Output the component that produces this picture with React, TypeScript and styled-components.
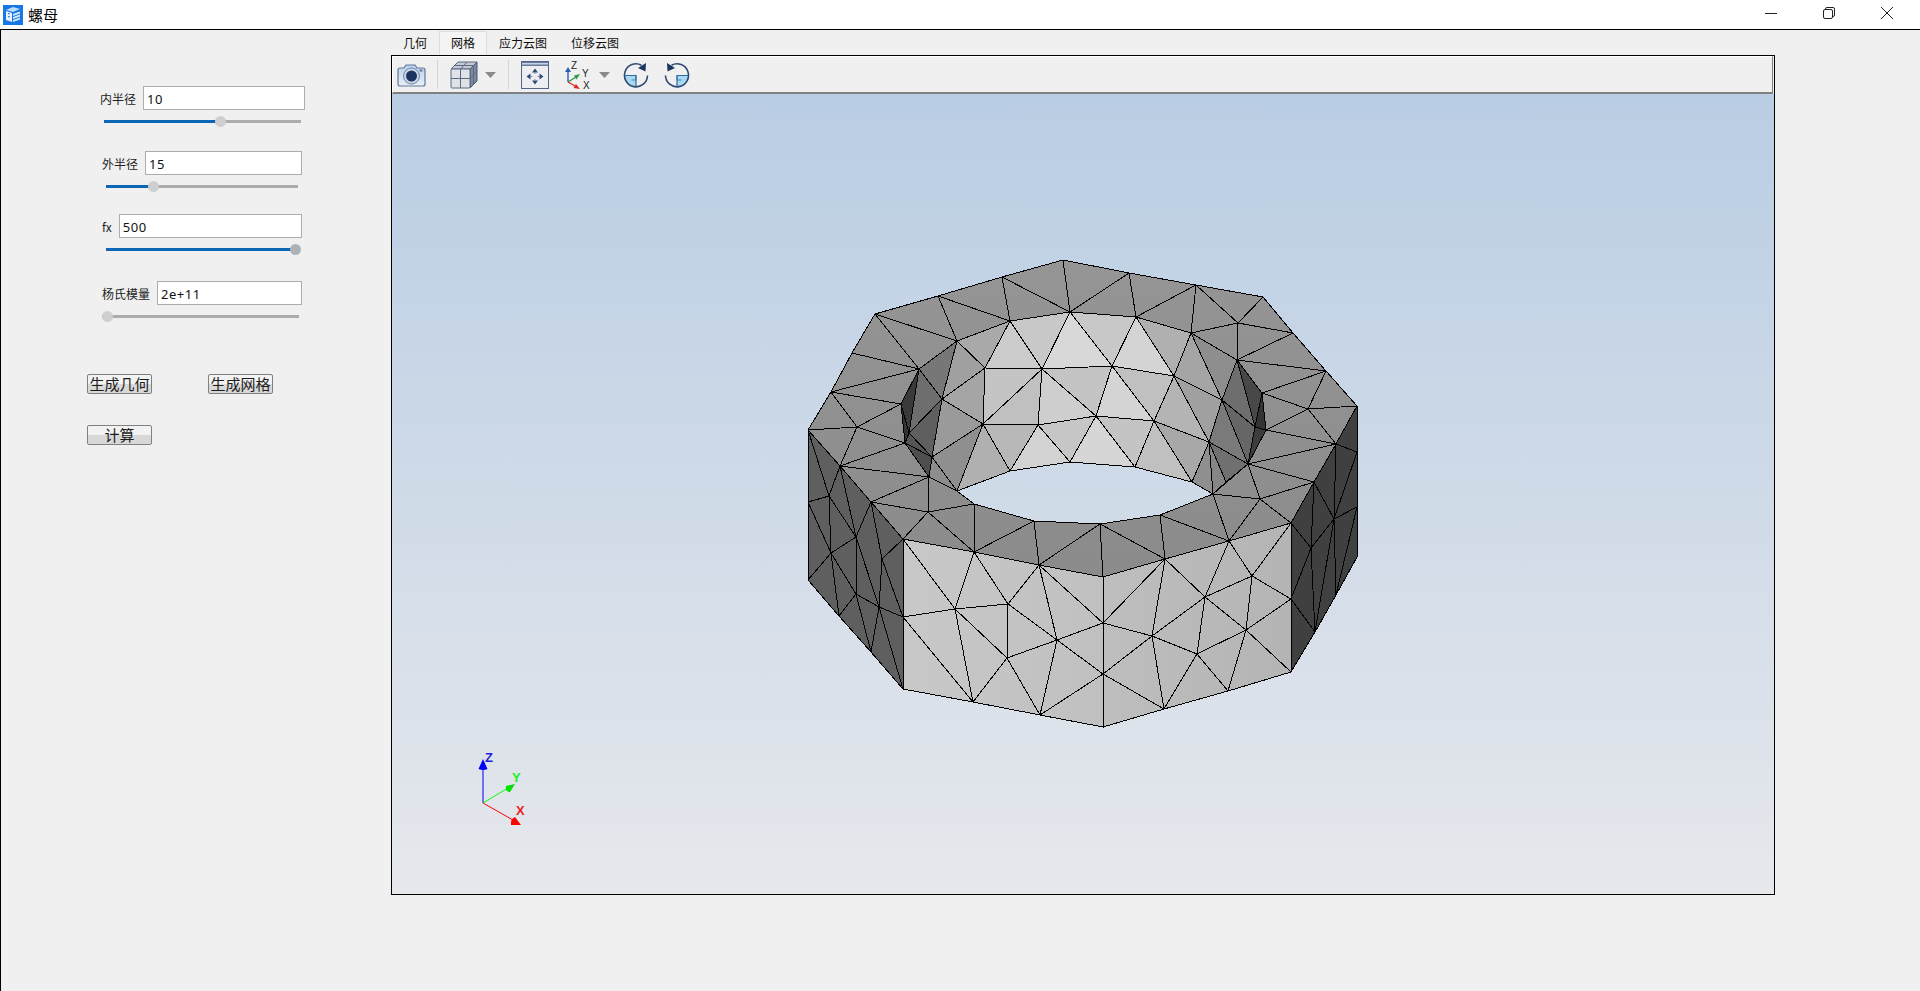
import React from "react";
import styled, { createGlobalStyle } from "styled-components";

const GlobalStyle = createGlobalStyle`
  html, body {
    margin: 0;
    padding: 0;
    background: #f0f0f0;
    overflow: hidden;
  }
  * {
    box-sizing: border-box;
  }
`;

const cjk = `"Noto Sans CJK SC", "Noto Sans", sans-serif`;

const Window = styled.div`
  width: 1920px;
  height: 991px;
  display: flex;
  flex-direction: column;
  font-family: ${cjk};
  color: #111;
`;

const TitleBar = styled.div`
  height: 29px;
  background: #fff;
  display: flex;
  align-items: center;
  padding: 0 4px 0 3px;
`;

const AppName = styled.span`
  font-size: 15px;
  margin-left: 5px;
  flex: 1;
  color: #000;
`;

const WinButton = styled.div`
  width: 58px;
  height: 29px;
  display: flex;
  align-items: center;
  justify-content: center;
  padding-bottom: 3px;
`;

const Body = styled.div`
  flex: 1;
  display: flex;
  background: #f0f0f0;
  border-top: 1px solid #000;
  border-left: 1px solid #000;
`;

const Sidebar = styled.div`
  width: 390px;
  padding-top: 56px;
`;

const Group = styled.div<{ $top: number }>`
  margin-top: ${({ $top }) => $top}px;
`;

const FieldRow = styled.div<{ $left: number; $width: number }>`
  display: flex;
  align-items: center;
  gap: 7px;
  height: 24px;
  margin-left: ${({ $left }) => $left}px;
  width: ${({ $width }) => $width}px;
`;

const FieldLabel = styled.label`
  font-size: 12px;
  white-space: nowrap;
  color: #222;
`;

const Input = styled.input`
  flex: 1;
  min-width: 0;
  height: 24px;
  border: 1px solid #adadad;
  background: #fff;
  padding: 1px 3px 0;
  font-family: "Noto Sans", sans-serif;
  font-size: 13px;
  letter-spacing: 0.5px;
  color: #111;
  outline: none;
`;

const SliderTrack = styled.div<{ $left: number; $width: number }>`
  position: relative;
  height: 3px;
  margin: 10px 0 0 ${({ $left }) => $left}px;
  width: ${({ $width }) => $width}px;
  background: #acacac;
`;

const SliderFill = styled.div`
  height: 3px;
  background: #0b66b6;
`;

const SliderThumb = styled.div<{ $hot?: boolean }>`
  position: absolute;
  top: -4px;
  width: 11px;
  height: 11px;
  margin-left: -5px;
  border-radius: 50%;
  background: ${({ $hot }) => ($hot ? "#adb2b7" : "#cfcfcf")};
`;

const ButtonRow = styled.div<{ $top: number }>`
  display: flex;
  gap: 56px;
  margin: ${({ $top }) => $top}px 0 0 86px;
`;

const PushButton = styled.button`
  width: 65px;
  height: 20px;
  padding: 0;
  border: 1px solid #808080;
  border-radius: 2px;
  background: linear-gradient(#f2f2f2 0, #f2f2f2 50%, #d8d8d8 50%, #d8d8d8 100%);
  font-family: ${cjk};
  font-size: 15px;
  line-height: 18px;
  color: #1c1c1c;
  white-space: nowrap;
  overflow: hidden;
`;

const Main = styled.div`
  width: 1384px;
  padding-top: 1px;
  display: flex;
  flex-direction: column;
`;

const TabBar = styled.div`
  height: 24px;
  display: flex;
`;

const Tab = styled.div<{ $active?: boolean }>`
  padding: 0 ${({ $active }) => ($active ? 11 : 12)}px;
  font-size: 12px;
  line-height: 24px;
  color: #111;
  ${({ $active }) =>
    $active
      ? `
    background: #f4f4f4;
    border: 1px solid #dcdcdc;
    border-bottom: 0;
    line-height: 22px;
  `
      : ""}
`;

const Frame = styled.div`
  width: 1384px;
  height: 840px;
  border: 1px solid #000;
  background: #f0f0f0;
`;

const Toolbar = styled.div`
  height: 38px;
  margin-right: 1px;
  border-top: 1px solid #fff;
  border-left: 1px solid #fff;
  border-right: 1px solid #808080;
  border-bottom: 2px solid #808080;
  display: flex;
  align-items: center;
`;

const ToolIcon = styled.svg<{ $left: number }>`
  flex: none;
  display: block;
  margin-left: ${({ $left }) => $left}px;
`;

const Separator = styled.div<{ $left: number }>`
  width: 1px;
  height: 29px;
  background: #d4d4d4;
  margin-left: ${({ $left }) => $left}px;
`;

const Viewport = styled.div`
  width: 1382px;
  height: 800px;
  background: linear-gradient(#b9cde4, #e6e8ec);
`;

const Scene = styled.svg`
  display: block;
`;

const AxisLetter = styled.text`
  font-family: "Liberation Sans", sans-serif;
  font-size: 13px;
  font-weight: 700;
`;

type P = [number, number];
const pts = (list: P[]) => list.map(([x, y]) => `${x},${y}`).join(" ");

// inner wall nodes
const a0: P = [919, 369];
const a1: P = [957, 341];
const a2: P = [1010, 321];
const a3: P = [1070, 312];
const a4: P = [1136, 317];
const a5: P = [1191, 333];
const a6: P = [1237, 360];
const m1: P = [942, 399];
const m2: P = [985, 368];
const m3: P = [1042, 369];
const m4: P = [1112, 366];
const m5: P = [1174, 376];
const m6: P = [1222, 400];
const n1: P = [932, 457];
const n2: P = [983, 424];
const n3: P = [1038, 425];
const n4: P = [1096, 416];
const n5: P = [1154, 421];
const n6: P = [1209, 442];
const b0: P = [957, 491];
const b1: P = [1010, 471];
const b2: P = [1070, 462];
const b3: P = [1135, 467];
const b4: P = [1192, 482];
const b5: P = [1213, 494];
const c: P = [1248, 464];
const e: P = [1226, 482];
const p: P = [1255, 427];
const u: P = [1262, 393];
const v: P = [1266, 430];
const q: P = [909, 433];
const r: P = [901, 404];
const s: P = [905, 443];
const t: P = [929, 477];

const wall: [P[], string][] = [
  [[a1, a2, m2], "#a9a9a9"],
  [[a2, a3, m3], "#c8c8c8"],
  [[a2, m2, m3], "#cbcbcb"],
  [[a3, m3, m4], "#d8d8d8"],
  [[a3, a4, m4], "#c8c8c8"],
  [[a4, m4, m5], "#d4d4d4"],
  [[a4, a5, m5], "#b0b0b0"],
  [[a5, m5, m6], "#a5a5a5"],
  [[a5, a6, m6], "#8e8e8e"],
  [[a1, m1, m2], "#a0a0a0"],
  [[a0, a1, m1], "#777777"],
  [[m1, m2, n2], "#a5a5a5"],
  [[m2, m3, n2], "#c4c4c4"],
  [[m3, n2, n3], "#c0c0c0"],
  [[m3, n3, n4], "#cecece"],
  [[m3, m4, n4], "#c4c4c4"],
  [[m4, n4, n5], "#d4d4d4"],
  [[m4, m5, n5], "#c0c0c0"],
  [[m5, n5, n6], "#b4b4b4"],
  [[m5, m6, n6], "#a0a0a0"],
  [[a6, m6, p], "#6e6e6e"],
  [[a6, u, p], "#484848"],
  [[u, v, p], "#333333"],
  [[m6, p, c], "#666666"],
  [[p, v, c], "#3c3c3c"],
  [[m6, n6, c], "#7a7a7a"],
  [[n6, e, c], "#707070"],
  [[n6, b4, b5], "#8f8f8f"],
  [[n6, b5, e], "#868686"],
  [[n5, n6, b4], "#a8a8a8"],
  [[n5, b3, b4], "#c0c0c0"],
  [[n4, n5, b3], "#c4c4c4"],
  [[n4, b2, b3], "#d6d6d6"],
  [[n3, n4, b2], "#c6c6c6"],
  [[n3, b1, b2], "#d2d2d2"],
  [[n2, n3, b1], "#b8b8b8"],
  [[n2, b0, b1], "#b0b0b0"],
  [[m1, n2, n1], "#9a9a9a"],
  [[n1, n2, b0], "#8f8f8f"],
  [[a0, m1, q], "#6e6e6e"],
  [[m1, n1, q], "#5f5f5f"],
  [[a0, r, q], "#3a3a3a"],
  [[r, q, s], "#333333"],
  [[q, s, n1], "#555555"],
  [[s, t, n1], "#4e4e4e"],
  [[n1, t, b0], "#8d8d8d"],
];

const ringOuter: P[] = [
  [808, 430], [831, 392], [852, 353], [875, 314], [938, 296], [1002, 277], [1063, 260],
  [1129, 273], [1196, 285], [1263, 297], [1293, 333], [1326, 371], [1357, 406],
  [1336, 444], [1314, 482], [1291, 523], [1229, 541], [1165, 559], [1103, 577],
  [1039, 565], [974, 552], [903, 539], [871, 502], [840, 466],
];

const ringInner: P[] = [
  a0, a1, a2, a3, a4, a5, a6, u, v, c, b5, [1160, 515], [1100, 524], [1034, 521],
  [974, 504], b0, t, s, r,
];

const frontLeft: P[] = [[903, 539], [974, 552], [1039, 565], [1103, 577], [1103, 727], [1040, 715], [973, 702], [903, 689]];
const frontRight: P[] = [[1103, 577], [1165, 559], [1229, 541], [1291, 523], [1291, 672], [1228, 691], [1164, 709], [1103, 727]];
const sideLeft: P[] = [[808, 430], [840, 466], [871, 502], [903, 539], [903, 689], [871, 652], [839, 616], [808, 580]];
const sideRight: P[] = [[1291, 523], [1314, 482], [1336, 444], [1357, 406], [1357, 557], [1336, 595], [1315, 632], [1291, 672]];

type L = [number, number, number, number];
const topLines: L[] = [
  [875, 314, 957, 341], [938, 296, 957, 341], [938, 296, 1010, 321], [1002, 277, 1010, 321],
  [1002, 277, 1070, 312], [1063, 260, 1070, 312], [875, 314, 919, 369], [852, 353, 919, 369],
  [831, 392, 919, 369], [831, 392, 901, 404], [831, 392, 857, 427], [808, 430, 857, 427],
  [901, 404, 857, 427], [857, 427, 905, 443], [857, 427, 840, 466], [840, 466, 905, 443],
  [840, 466, 929, 477], [929, 477, 871, 502], [929, 477, 928, 512], [928, 512, 871, 502],
  [928, 512, 974, 504], [928, 512, 903, 539], [928, 512, 974, 552], [974, 504, 974, 552],
  [974, 552, 1034, 521], [1034, 521, 1039, 565], [1039, 565, 1100, 524], [1100, 524, 1103, 577],
  [1100, 524, 1165, 559], [1160, 515, 1165, 559], [1160, 515, 1229, 541], [1213, 494, 1229, 541],
  [1260, 499, 1229, 541], [1213, 494, 1260, 499], [1260, 499, 1291, 523], [1260, 499, 1314, 482],
  [1248, 464, 1260, 499], [1248, 464, 1314, 482], [1248, 464, 1336, 444], [1266, 430, 1336, 444],
  [1266, 430, 1308, 409], [1262, 393, 1308, 409], [1262, 393, 1326, 371], [1308, 409, 1326, 371],
  [1308, 409, 1357, 406], [1308, 409, 1336, 444], [1336, 444, 1357, 406], [1237, 360, 1326, 371],
  [1237, 360, 1293, 333], [1237, 360, 1238, 323], [1191, 333, 1238, 323], [1238, 323, 1293, 333],
  [1238, 323, 1196, 285], [1238, 323, 1263, 297], [1191, 333, 1196, 285], [1136, 317, 1196, 285],
  [1136, 317, 1129, 273], [1070, 312, 1129, 273],
];

const wallLines: L[] = [[1209, 442, 1226, 482]];

const frontLines: L[] = [
  [903, 539, 955, 609], [974, 552, 955, 609], [974, 552, 1008, 604], [1039, 565, 1008, 604],
  [1039, 565, 1057, 640], [1039, 565, 1103, 623], [903, 617, 955, 609], [955, 609, 1008, 604],
  [1008, 604, 1057, 640], [1008, 604, 1007, 658], [955, 609, 1007, 658], [955, 609, 973, 702],
  [903, 617, 973, 702], [1007, 658, 973, 702], [1007, 658, 1040, 715], [1007, 658, 1057, 640],
  [1057, 640, 1103, 623], [1057, 640, 1040, 715], [1057, 640, 1103, 674], [1103, 674, 1040, 715],
  [1103, 577, 1103, 727], [1103, 623, 1165, 559], [1165, 559, 1152, 636], [1165, 559, 1205, 597],
  [1229, 541, 1205, 597], [1229, 541, 1252, 576], [1291, 523, 1252, 576], [1205, 597, 1252, 576],
  [1252, 576, 1291, 599], [1252, 576, 1246, 630], [1205, 597, 1246, 630], [1205, 597, 1197, 654],
  [1205, 597, 1152, 636], [1103, 623, 1152, 636], [1103, 674, 1152, 636], [1152, 636, 1197, 654],
  [1152, 636, 1164, 709], [1103, 674, 1164, 709], [1197, 654, 1164, 709], [1197, 654, 1228, 691],
  [1197, 654, 1246, 630], [1246, 630, 1228, 691], [1246, 630, 1291, 599], [1246, 630, 1291, 672],
];

const sideLines: L[] = [
  [808, 502, 829, 496], [808, 430, 829, 496], [840, 466, 829, 496], [840, 466, 856, 537],
  [829, 496, 856, 537], [871, 502, 856, 537], [871, 502, 882, 559], [903, 539, 882, 559],
  [856, 537, 831, 553], [856, 537, 856, 594], [856, 537, 879, 607], [882, 559, 879, 607],
  [882, 559, 903, 617], [879, 607, 903, 617], [856, 594, 879, 607], [856, 594, 831, 553],
  [856, 594, 839, 616], [831, 553, 808, 502], [831, 553, 829, 496], [831, 553, 839, 616],
  [831, 553, 808, 580], [856, 594, 871, 652], [879, 607, 871, 652], [879, 607, 903, 689],
  [1291, 523, 1311, 548], [1314, 482, 1311, 548], [1314, 482, 1334, 519], [1336, 444, 1334, 519],
  [1336, 444, 1357, 452], [1357, 452, 1334, 519], [1357, 507, 1334, 519], [1311, 548, 1334, 519],
  [1311, 548, 1291, 599], [1311, 548, 1315, 632], [1334, 519, 1315, 632], [1334, 519, 1336, 595],
  [1357, 507, 1336, 595], [1291, 599, 1315, 632], [1291, 672, 1315, 632],
];

const MeshLines: React.FC<{ lines: L[] }> = ({ lines }) => (
  <g stroke="#000" strokeWidth={1} shapeRendering="crispEdges">
    {lines.map(([x1, y1, x2, y2]) => (
      <line key={`${x1}-${y1}-${x2}-${y2}`} x1={x1} y1={y1} x2={x2} y2={y2} />
    ))}
  </g>
);

const Outline: React.FC<{ points: P[]; fill: string }> = ({ points, fill }) => (
  <polygon points={pts(points)} fill={fill} stroke="#000" strokeWidth={1} shapeRendering="crispEdges" />
);

const Nut = () => (
  <Scene width={1382} height={800} viewBox="392 94 1382 800">
    <defs>
      <linearGradient id="topFace" x1="0" y1="0" x2="0" y2="1">
        <stop offset="0" stopColor="#959595" />
        <stop offset="1" stopColor="#8b8b8b" />
      </linearGradient>
      <linearGradient id="frontFace" x1="0" y1="0" x2="1" y2="0">
        <stop offset="0" stopColor="#c8c8c8" />
        <stop offset="1" stopColor="#c0c0c0" />
      </linearGradient>
      <linearGradient id="frontFaceRight" x1="0" y1="0" x2="1" y2="0">
        <stop offset="0" stopColor="#bebebe" />
        <stop offset="1" stopColor="#b4b4b4" />
      </linearGradient>
    </defs>

    {wall.map(([tri, fill]) => (
      <polygon
        key={pts(tri)}
        points={pts(tri)}
        fill={fill}
        stroke="#000"
        strokeWidth={1}
        shapeRendering="crispEdges"
      />
    ))}
    <MeshLines lines={wallLines} />

    <path
      d={`M${pts(ringOuter)}Z M${pts(ringInner)}Z`}
      fill="url(#topFace)"
      fillRule="evenodd"
      stroke="#000"
      strokeWidth={1}
      shapeRendering="crispEdges"
    />
    <MeshLines lines={topLines} />

    <Outline points={sideLeft} fill="#5f5f5f" />
    <Outline points={sideRight} fill="#404040" />
    <Outline points={frontLeft} fill="url(#frontFace)" />
    <Outline points={frontRight} fill="url(#frontFaceRight)" />
    <MeshLines lines={frontLines} />
    <MeshLines lines={sideLines} />

    {/* triad */}
    <line x1={483} y1={803} x2={483} y2={765} stroke="#0000ff" strokeWidth={1} />
    <path d="M483 759 L487.5 769 Q483 771 478.5 769 Z" fill="#0000ff" />
    <line x1={483} y1={803} x2={508} y2={788} stroke="#00ff00" strokeWidth={1} />
    <path d="M515 784 L510 792 Q505 792 506 786 Z" fill="#00e000" />
    <line x1={483} y1={803} x2={513} y2={820} stroke="#ff0000" strokeWidth={1} />
    <path d="M521 825 L511 825 Q510 819 515 817 Z" fill="#ff0000" />
    <AxisLetter x={485} y={762} fill="#2222dd">Z</AxisLetter>
    <AxisLetter x={512} y={782} fill="#22ee22">Y</AxisLetter>
    <AxisLetter x={516} y={815} fill="#ee2222">X</AxisLetter>
  </Scene>
);

const Logo = () => (
  <svg width={20} height={20} viewBox="0 0 20 20">
    <rect width={20} height={20} fill="#1677e8" />
    <path d="M3 5 L10 2 L17 4 L10 7 Z" fill="#bcdcfb" />
    <path d="M3 6 L9 8 V17 L3 15 Z" fill="#eaf4fe" />
    <path d="M5 8.5 L7 9 M5 11.5 L7 12" stroke="#1677e8" strokeWidth={1.2} />
    <path d="M10 9 L17 6.5 V8.5 L10 11 Z M10 12 L17 9.5 V11.5 L10 14 Z M10 15 L17 12.5 V14.5 L10 17 Z" fill="#d8eafd" />
  </svg>
);

const Minimize = () => (
  <svg width={12} height={12} viewBox="0 0 12 12">
    <path d="M0 6.5 H12" stroke="#222" strokeWidth={1} />
  </svg>
);

const Restore = () => (
  <svg width={12} height={12} viewBox="0 0 12 12" fill="none" stroke="#222" strokeWidth={1}>
    <rect x={0.5} y={2.5} width={9} height={9} rx={1.5} />
    <path d="M2.5 2.5 V2 A1.5 1.5 0 0 1 4 0.5 H10 A1.5 1.5 0 0 1 11.5 2 V8 A1.5 1.5 0 0 1 10 9.5 H9.5" />
  </svg>
);

const Close = () => (
  <svg width={12} height={12} viewBox="0 0 12 12" stroke="#222" strokeWidth={1}>
    <path d="M0 0 L12 12 M12 0 L0 12" />
  </svg>
);

const DropArrow: React.FC<{ left: number }> = ({ left }) => (
  <ToolIcon $left={left} width={11} height={6} viewBox="0 0 11 6">
    <path d="M0 0 H11 L5.5 6 Z" fill="#8a8a8a" />
  </ToolIcon>
);

const CameraIcon = () => (
  <ToolIcon $left={4} width={29} height={24} viewBox="0 0 29 24">
    <defs>
      <linearGradient id="camBody" x1="0" y1="0" x2="0" y2="1">
        <stop offset="0" stopColor="#b9d0ea" />
        <stop offset="1" stopColor="#e9f0f8" />
      </linearGradient>
    </defs>
    <path
      d="M2.5 5 H7 L9 2 H18 L20 5 H26 Q28 5 28 7 V21 Q28 23 26 23 H3 Q1 23 1 21 V7 Q1 5 2.5 5 Z"
      fill="url(#camBody)"
      stroke="#5f7896"
      strokeWidth={1.2}
    />
    <circle cx={14.5} cy={13} r={8} fill="#c9d6e6" stroke="#6d86a4" />
    <circle cx={14.5} cy={13} r={5.5} fill="#1d3461" />
    <rect x={22.5} y={6.5} width={3} height={2} fill="#5f7896" />
  </ToolIcon>
);

const CubeIcon = () => (
  <ToolIcon $left={12} width={28} height={28} viewBox="0 0 28 28">
    <path d="M1 8 L8 1 H27 L20 8 Z" fill="#c4cad3" stroke="#5a6a84" />
    <path d="M20 8 L27 1 V20 L20 27 Z" fill="#7d8a9e" stroke="#47597a" />
    <rect x={1} y={8} width={19} height={19} rx={1} fill="#dfe3e8" stroke="#5a6a84" />
    <path
      d="M10.5 8 V27 M1 17.5 H20 M17 1 L10.5 8 M4.5 4.5 H23.5 M23.5 4.5 V23.5 M20 17.5 L27 10.5"
      stroke="#5a6a84"
      fill="none"
    />
  </ToolIcon>
);

const FitIcon = () => (
  <ToolIcon $left={12} width={28} height={28} viewBox="0 0 28 28">
    <rect x={0.5} y={0.5} width={27} height={27} fill="#eceef2" stroke="#52668a" />
    <rect x={0} y={0} width={28} height={5} fill="#52668a" opacity={0.85} />
    <rect x={1} y={2} width={26} height={1.5} fill="#c4d4e8" />
    <path d="M14 7.5 L17 11.5 H11 Z M14 23.5 L17 19.5 H11 Z M5.5 15.5 L9.5 12.5 V18.5 Z M22.5 15.5 L18.5 12.5 V18.5 Z" fill="#2e4a78" />
    <path d="M14 11 V13 M14 18 V20 M9 15.5 H11.5 M16.5 15.5 H19" stroke="#7a8ca8" strokeWidth={1} />
  </ToolIcon>
);

const AxesIcon = () => (
  <ToolIcon $left={16} width={27} height={30} viewBox="0 -2 27 30">
    <path d="M3 20 V9" stroke="#2c5fb3" strokeWidth={1.4} />
    <path d="M3 5 L6 10 H0 Z" fill="#2c5fb3" />
    <path d="M3 20 L11 15" stroke="#2d9a45" strokeWidth={1.4} />
    <path d="M15 12 L11.5 17.5 L9 13.5 Z" fill="#2d9a45" />
    <path d="M3 20 L11 24.5" stroke="#e02b2b" strokeWidth={1.4} />
    <path d="M15 27 L8.5 26 L11 22 Z" fill="#e02b2b" />
    <text x={6} y={7} fontFamily="'Liberation Sans', sans-serif" fontSize={10} fill="#222">Z</text>
    <text x={17} y={15} fontFamily="'Liberation Sans', sans-serif" fontSize={10} fill="#222">Y</text>
    <text x={18} y={27} fontFamily="'Liberation Sans', sans-serif" fontSize={10} fill="#222">X</text>
  </ToolIcon>
);

const RotateIcon: React.FC<{ left: number; flip?: boolean }> = ({ left, flip }) => (
  <ToolIcon $left={left} width={26} height={26} viewBox="0 0 26 26">
    <g transform={flip ? "translate(26 0) scale(-1 1)" : undefined}>
      <path d="M1.5 13.5 A11.5 11.5 0 0 0 13 25 V13.5 Z" fill="#a8d8f2" />
      <path d="M13 13.5 V18 H8.5" fill="none" stroke="#4a89b8" strokeWidth={1} />
      <path d="M18.5 3.2 A11.5 11.5 0 1 0 24.5 13.5 " fill="none" stroke="#2f4a72" strokeWidth={1.6} />
      <path d="M1.5 13.5 H13 V25" fill="none" stroke="#2f6aa0" strokeWidth={1.2} />
      <path d="M23 1 L22.5 9.5 L15 6 Z" fill="#1d3461" />
    </g>
  </ToolIcon>
);

interface FieldProps {
  top: number;
  rowLeft: number;
  rowWidth: number;
  label: string;
  value: string;
  sliderLeft: number;
  sliderWidth: number;
  thumb: number;
  hot?: boolean;
}

const Field: React.FC<FieldProps> = ({
  top,
  rowLeft,
  rowWidth,
  label,
  value,
  sliderLeft,
  sliderWidth,
  thumb,
  hot,
}) => (
  <Group $top={top}>
    <FieldRow $left={rowLeft} $width={rowWidth}>
      <FieldLabel>{label}</FieldLabel>
      <Input defaultValue={value} />
    </FieldRow>
    <SliderTrack $left={sliderLeft} $width={sliderWidth}>
      <SliderFill style={{ width: thumb }} />
      <SliderThumb $hot={hot} style={{ left: thumb }} />
    </SliderTrack>
  </Group>
);

const App = () => (
  <Window>
    <GlobalStyle />
    <TitleBar>
      <Logo />
      <AppName>螺母</AppName>
      <WinButton>
        <Minimize />
      </WinButton>
      <WinButton>
        <Restore />
      </WinButton>
      <WinButton>
        <Close />
      </WinButton>
    </TitleBar>
    <Body>
      <Sidebar>
        <Field top={0} rowLeft={99} rowWidth={205} label="内半径" value="10" sliderLeft={103} sliderWidth={197} thumb={116} />
        <Field top={28} rowLeft={101} rowWidth={200} label="外半径" value="15" sliderLeft={105} sliderWidth={192} thumb={47} />
        <Field top={26} rowLeft={101} rowWidth={200} label="fx" value="500" sliderLeft={105} sliderWidth={194} thumb={189} hot />
        <Field top={30} rowLeft={101} rowWidth={200} label="杨氏模量" value="2e+11" sliderLeft={101} sliderWidth={197} thumb={5} />
        <ButtonRow $top={56}>
          <PushButton>生成几何</PushButton>
          <PushButton>生成网格</PushButton>
        </ButtonRow>
        <ButtonRow $top={31}>
          <PushButton>计算</PushButton>
        </ButtonRow>
      </Sidebar>
      <Main>
        <TabBar>
          <Tab>几何</Tab>
          <Tab $active>网格</Tab>
          <Tab>应力云图</Tab>
          <Tab>位移云图</Tab>
        </TabBar>
        <Frame>
          <Toolbar>
            <CameraIcon />
            <Separator $left={11} />
            <CubeIcon />
            <DropArrow left={7} />
            <Separator $left={12} />
            <FitIcon />
            <AxesIcon />
            <DropArrow left={7} />
            <RotateIcon left={13} />
            <RotateIcon left={15} flip />
          </Toolbar>
          <Viewport>
            <Nut />
          </Viewport>
        </Frame>
      </Main>
    </Body>
  </Window>
);

export default App;
